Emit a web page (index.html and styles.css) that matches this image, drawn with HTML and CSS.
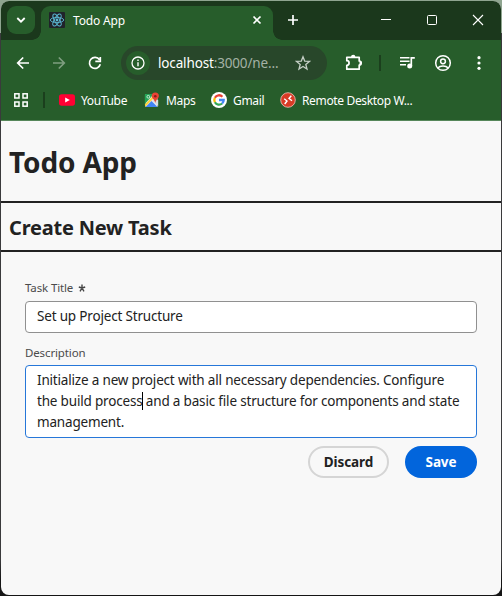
FILE: index.html
```html
<!DOCTYPE html>
<html lang="en">
<head>
<meta charset="utf-8">
<title>Todo App</title>
<link rel="stylesheet" href="styles.css">
</head>
<body>
<div class="window">
  <header class="tabstrip">
    <button class="tab-search" aria-label="Search tabs"><svg width="10" height="8" viewBox="0 0 10 8"><path d="M1.3 2 5 5.7 8.7 2" fill="none" stroke="#fff" stroke-width="1.8"/></svg></button>
    <div class="tab">
      <svg class="favicon" width="16" height="16" viewBox="0 0 16 16"><rect width="16" height="16" rx="1" fill="#20232a"/><g fill="none" stroke="#5bb8d4" stroke-width=".9"><ellipse cx="8" cy="8" rx="6.7" ry="2.6"/><ellipse cx="8" cy="8" rx="6.7" ry="2.6" transform="rotate(60 8 8)"/><ellipse cx="8" cy="8" rx="6.7" ry="2.6" transform="rotate(120 8 8)"/></g><circle cx="8" cy="8" r="1.4" fill="#5bb8d4"/></svg>
      <span class="tab-title">Todo App</span>
      <svg class="tab-close" width="10" height="10" viewBox="0 0 10 10"><path d="M1.5 1.5l7 7M8.500 1.500l-7 7" stroke="#fff" stroke-width="1.7"/></svg>
    </div>
    <svg class="new-tab" width="12" height="12" viewBox="0 0 12 12"><path d="M6 1v10M1 6h10" stroke="#fff" stroke-width="1.7"/></svg>
    <div class="controls">
      <svg width="46" height="38" viewBox="0 0 46 38"><path d="M18 18.500h10" stroke="#fff"/></svg>
      <svg width="46" height="38" viewBox="0 0 46 38"><rect x="18.500" y="14.500" width="9" height="9" rx="1" fill="none" stroke="#fff"/></svg>
      <svg width="46" height="38" viewBox="0 0 46 38"><path d="M18 14l10 10M28 14L18 24" stroke="#fff" stroke-width="1.100"/></svg>
    </div>
  </header>
  <div class="chrome">
    <nav class="toolbar">
      <svg class="tool" viewBox="0 0 36 36"><path d="M24 18H13M18.200 12.500L12.700 18l5.500 5.500" fill="none" stroke="#fff" stroke-width="1.700"/></svg>
      <svg class="tool" viewBox="0 0 36 36"><path d="M12 18h11M17.800 12.500l5.500 5.500-5.500 5.500" fill="none" stroke="#7f9e80" stroke-width="1.700"/></svg>
      <svg class="tool" viewBox="0 0 36 36"><path d="M22.500 14.800A5.500 5.500 0 1 0 23.300 19.300M23.300 12v4.300h-5" fill="none" stroke="#fff" stroke-width="1.700"/></svg>
      <div class="omnibox">
        <span class="site-info"><svg width="16" height="16" viewBox="0 0 16 16"><circle cx="8" cy="8" r="6" fill="none" stroke="#fff" stroke-width="1.300"/><path d="M8 7.200v4M8 4.500v1.500" stroke="#fff" stroke-width="1.400"/></svg></span>
        <span class="url">localhost<span class="url-path">:3000/ne...</span></span>
        <svg class="star" width="16" height="16" viewBox="0 0 16 16"><path d="M8 1.800l1.700 4.300 4.700.3-3.600 3 1.200 4.600L8 11.500 4 14l1.200-4.600-3.600-3 4.700-.3z" fill="none" stroke="#c4cec5" stroke-width="1.300"/></svg>
      </div>
      <svg class="tool extensions" viewBox="0 0 36 36"><path d="M11.800 12.300h12.400v3.700a1.800 1.800 0 0 1 0 4v4.200h-12.400v-3.900a2.300 2.300 0 0 0 0-4.600z" fill="none" stroke="#fff" stroke-width="1.700" stroke-linejoin="round"/><path d="M16 12a2.200 2.200 0 0 1 4.400 0zM24.500 16a2.100 2.100 0 0 1 0 4.200z" fill="#fff"/></svg>
      <span class="separator"></span>
      <svg class="tool media" viewBox="0 0 36 36"><path d="M11 12.800h9.500M11 16.300h9.500M11 19.800h6" stroke="#fff" stroke-width="1.500"/><path d="M22.300 21v-8.200h3.500" fill="none" stroke="#fff" stroke-width="1.700"/><circle cx="20.700" cy="20.900" r="2.500" fill="#fff"/></svg>
      <svg class="tool" viewBox="0 0 36 36"><g fill="none" stroke="#fff" stroke-width="1.500"><circle cx="18" cy="18" r="7.300"/><circle cx="18" cy="16.300" r="2.400"/><path d="M12.700 23c2.600-2.600 8-2.600 10.600 0"/></g></svg>
      <svg class="tool" viewBox="0 0 36 36"><g fill="#fff"><circle cx="18" cy="12.700" r="1.600"/><circle cx="18" cy="18" r="1.600"/><circle cx="18" cy="23.300" r="1.600"/></g></svg>
    </nav>
    <nav class="bookmarks">
      <svg class="apps" width="14" height="14" viewBox="0 0 14 14"><g fill="none" stroke="#fff" stroke-width="1.500"><rect x=".8" y=".8" width="4.200" height="4.200"/><rect x="9" y=".8" width="4.200" height="4.200"/><rect x=".8" y="9" width="4.200" height="4.200"/><rect x="9" y="9" width="4.200" height="4.200"/></g></svg>
      <span class="separator"></span>
      <a class="bookmark youtube"><svg width="16" height="16" viewBox="0 0 16 16"><rect y="2.300" width="16" height="11.400" rx="2.600" fill="#f03"/><path d="M6.200 5.500v5L10.800 8z" fill="#fff"/></svg><span>YouTube</span></a>
      <a class="bookmark maps"><svg width="16" height="16" viewBox="0 0 16 16"><path d="M1.500 2h12v13h-12z" fill="#e8eaed"/><path d="M.8 3a1 1 0 0 1 1-1h8L.8 12z" fill="#23a455"/><path d="M1.500 15l6-6 6 6z" fill="#4285f4"/><path d="M.8 12.500l8.700-9 1.500 1.500L1.300 14.700z" fill="#fdd23b"/><path d="M8.300 8.200l5.900 6V8z" fill="#d9dcdf"/><circle cx="4.300" cy="4.800" r="1.400" fill="none" stroke="#fff" stroke-width=".7"/><path d="M11.300.5a3.600 3.600 0 0 0-3.600 3.600c0 2.400 2.900 3.400 3.600 6.900.7-3.500 3.600-4.500 3.600-6.900A3.600 3.600 0 0 0 11.300.5z" fill="#ea4335"/><circle cx="11.300" cy="4.200" r="1.300" fill="#8c1d18"/></svg><span>Maps</span></a>
      <a class="bookmark gmail"><svg width="16" height="16" viewBox="0 0 16 16"><circle cx="8" cy="8" r="8" fill="#fff"/><g fill="none" stroke-width="2.300"><path d="M11.400 4.700A4.700 4.700 0 0 0 3.900 5.700" stroke="#ea4335"/><path d="M3.900 5.700a4.700 4.700 0 0 0 0 4.600" stroke="#fbbc05"/><path d="M3.900 10.300a4.700 4.700 0 0 0 7.200 1.200" stroke="#34a853"/><path d="M11.100 11.500A4.700 4.700 0 0 0 12.700 8H8" stroke="#4285f4"/></g></svg><span>Gmail</span></a>
      <a class="bookmark remote"><svg width="16" height="16" viewBox="0 0 16 16"><circle cx="8" cy="8" r="7.300" fill="#d83b26" stroke="#f3c5bd" stroke-width=".8"/><path d="M4.200 6.800L7 9l-2.300 3M11.300 3.800L9 6.500l3 2.300" fill="none" stroke="#fff" stroke-width="1.400"/></svg><span>Remote Desktop W...</span></a>
    </nav>
  </div>
  <main class="page">
    <h1><span>Todo App</span></h1>
    <h2><span>Create New Task</span></h2>
    <form class="form">
      <label class="label" for="title"><span>Task Title</span><svg class="required" width="8" height="8" viewBox="0 0 8 8"><path d="M4 .5V4M.8 3L4 4l3.200-1M2 7.300L4 4l2 3.300" fill="none" stroke="#444" stroke-width="1.400"/></svg></label>
      <div class="field" id="title"><span>Set up Project Structure</span></div>
      <label class="label second"><span>Description</span></label>
      <div class="field area"><div><span>Initialize a new project with all necessary dependencies. Configure</span></div><div><span>the build process</span><i class="caret"></i><span>&nbsp;and a basic file structure for components and state</span></div><div><span>management.</span></div></div>
      <div class="actions"><button type="button" class="btn discard"><span>Discard</span></button><button type="button" class="btn save"><span>Save</span></button></div>
    </form>
  </main>
</div>
</body>
</html>
```

FILE: styles.css
```css
* { box-sizing: border-box; }
body {
  margin: 0;
  width: 502px;
  height: 596px;
  padding: 1px;
  overflow: hidden;
  background: linear-gradient(#8fa590 0 33px, #3a3a3c 33px 560px, #151515 580px);
  font-family: "Noto Sans", "Open Sans", sans-serif;
}
svg { display: block; flex: none; }
span { white-space: nowrap; }
button { font-family: inherit; padding: 0; border: 0; }
.window { height: 594px; border-radius: 8px; overflow: hidden; background: #f8f8f8; display: flex; flex-direction: column; }
.tabstrip { height: 39px; flex: none; background: #1b381c; display: flex; }
.tab-search { width: 28px; height: 28px; margin: 5px 6px 0; border-radius: 9px; background: #275d2b; display: grid; place-items: center; }
.tab { position: relative; width: 232px; height: 34px; margin-top: 5px; padding: 0 11px 6px 8px; border-radius: 9px 9px 0 0; background: #275d2b; display: flex; align-items: center; }
.tab::before, .tab::after { content: ""; position: absolute; bottom: 0; width: 9px; height: 9px; }
.tab::before { left: -9px; background: radial-gradient(circle at 0 0, transparent 8.500px, #275d2b 9px); }
.tab::after { right: -9px; background: radial-gradient(circle at 100% 0, transparent 8.500px, #275d2b 9px); }
.tab-title { margin: 1px 0 0 8px; font-size: 12px; letter-spacing: -.15px; color: #fff; }
.tab-close { margin-left: auto; }
.new-tab { margin: 13px 0 0 14px; }
.controls { margin-left: auto; display: flex; }
.chrome { height: 81px; flex: none; background: #275d2b; border-bottom: 1px solid #56875a; }
.toolbar { height: 46px; padding: 0 4px; display: flex; align-items: center; }
.tool { width: 36px; height: 36px; }
.omnibox { width: 206px; height: 34px; margin-left: 8px; padding: 0 16px 0 5px; border-radius: 17px; background: #28472a; display: flex; align-items: center; }
.site-info { width: 24px; height: 24px; border-radius: 50%; background: #275d2b; display: grid; place-items: center; }
.url { margin-left: 8px; font-size: 13.500px; letter-spacing: -.15px; color: #fff; }
.url-path { color: #a4b2a5; }
.star { margin-left: auto; }
.extensions { margin-left: 8px; }
.separator { width: 2px; height: 16px; background: #1b3f1d; }
.toolbar .separator { margin-left: 8px; }
.media { margin-left: 8px; }
.bookmarks { height: 28px; padding-left: 13px; display: flex; align-items: center; font-size: 12px; letter-spacing: -.35px; color: #fff; }
.bookmarks .separator { margin-left: 15px; }
.bookmark { display: flex; align-items: center; gap: 6px; }
.youtube { width: 85px; margin-left: 14px; }
.maps { width: 67px; }
.gmail { width: 69px; }
.page { flex: 1; color: #222; }
h1, h2 { margin: 0; padding-left: 8px; border-bottom: 2px solid #222; }
h1 { height: 82px; font-size: 28px; line-height: 83px; letter-spacing: -.15px; }
h2 { height: 49px; font-size: 20px; line-height: 49px; letter-spacing: -.2px; }
.form { padding: 27px 24px 0; display: flex; flex-direction: column; }
.label { height: 22px; line-height: 18px; font-size: 11.500px; letter-spacing: -.13px; color: #4b4b4b; display: flex; gap: 5px; }
.required { margin-top: 5px; }
.field { height: 32px; padding: 0 11px; border: 1px solid #909090; border-radius: 4px; background: #fff; font-size: 13.500px; letter-spacing: -.18px; line-height: 29px; color: #222; }
.second { height: 21px; margin-top: 11px; }
.area { height: 73px; padding-top: 4px; line-height: 21px; border-color: #2677d9; }
.area > div { display: flex; height: 21px; }
.caret { width: 1px; height: 18px; margin: 1px 0 0 -1px; background: #000; }
.actions { margin-top: 8px; display: flex; justify-content: flex-end; gap: 16px; }
.btn { height: 32px; border-radius: 16px; font-size: 13.500px; font-weight: 700; letter-spacing: -.1px; line-height: 27px; }
.discard { width: 81px; border: 2px solid #d5d5d5; background: #f8f8f8; color: #222; }
.save { width: 72px; background: #0265dc; color: #fff; }
```
